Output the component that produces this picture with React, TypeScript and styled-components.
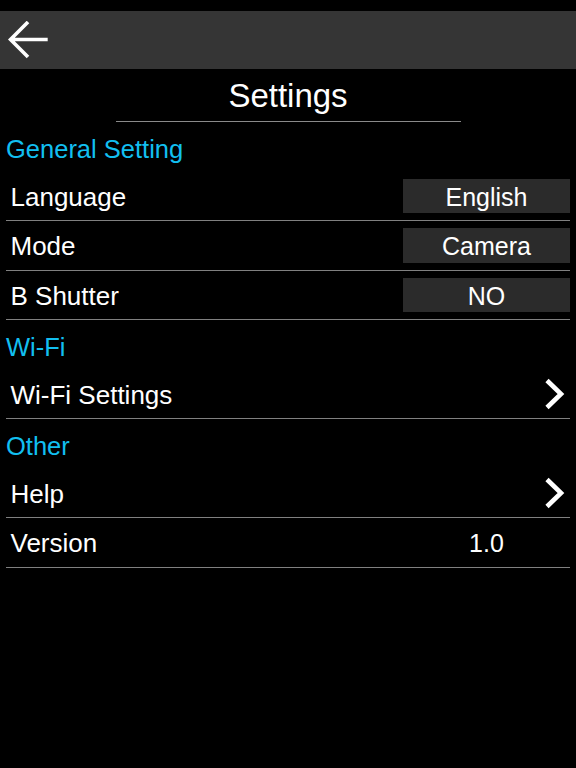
import React from "react";
import styled, { createGlobalStyle } from "styled-components";

const GlobalStyle = createGlobalStyle`
  html, body {
    margin: 0;
    padding: 0;
    background: #000;
    min-height: 100vh;
  }
  body {
    font-family: "Liberation Sans", Arial, sans-serif;
    color: #fff;
  }
`;

const Page = styled.div`
  padding-top: 11px;
  background: #000;
  min-height: 757px;
`;

const Toolbar = styled.div`
  height: 57.7px;
  background: #353535;
  display: flex;
  align-items: center;
  padding-left: 8px;
`;

const BackButton = styled.button`
  background: none;
  border: none;
  padding: 0;
  width: 42px;
  height: 40px;
  display: flex;
  align-items: center;
  cursor: pointer;
`;

const Title = styled.h1`
  width: 345px;
  margin: 0 auto;
  padding: 9px 0 7.5px;
  line-height: 36px;
  font-size: 33px;
  font-weight: normal;
  text-align: center;
  border-bottom: 1.5px solid #8a8a8a;
`;

const List = styled.div`
  padding: 0 6px;
`;

const SectionHeader = styled.div`
  height: 49.5px;
  box-sizing: border-box;
  padding-top: 3.5px;
  line-height: 46px;
  font-size: 25.5px;
  color: #12bff0;
`;

const Row = styled.div`
  height: 49.5px;
  box-sizing: border-box;
  border-bottom: 1px solid #808080;
  display: flex;
  align-items: center;
`;

const Label = styled.span`
  padding: 3px 0 0 4.5px;
  font-size: 26px;
  flex: 1;
`;

const ValueBox = styled.div`
  width: 167px;
  height: 34.4px;
  line-height: 34.4px;
  padding-top: 1px;
  box-sizing: border-box;
  background: #2b2b2b;
  text-align: center;
  font-size: 25px;
`;

const PlainValue = styled.div`
  width: 167px;
  padding-top: 3px;
  text-align: center;
  font-size: 25px;
`;

const ChevronWrap = styled.div`
  width: 22px;
  height: 32px;
  margin-right: 5px;
  display: flex;
`;

const BackArrow = () => (
  <svg width="40" height="38" viewBox="0 0 40 38">
    <path d="M2.5 18.5 H39.7 M20 1 L2.5 18.5 L20 36" fill="none" stroke="#fff" strokeWidth="3.6" />
  </svg>
);

const Chevron = () => (
  <ChevronWrap>
    <svg width="22" height="32" viewBox="0 0 22 32">
      <path d="M4 2.5 L18 16 L4 29.5" fill="none" stroke="#fff" strokeWidth="4.6" />
    </svg>
  </ChevronWrap>
);

type Item = {
  label: string;
  value?: string;
  plain?: string;
  link?: boolean;
};

const sections: { title: string; items: Item[] }[] = [
  {
    title: "General Setting",
    items: [
      { label: "Language", value: "English" },
      { label: "Mode", value: "Camera" },
      { label: "B Shutter", value: "NO" },
    ],
  },
  { title: "Wi-Fi", items: [{ label: "Wi-Fi Settings", link: true }] },
  {
    title: "Other",
    items: [
      { label: "Help", link: true },
      { label: "Version", plain: "1.0" },
    ],
  },
];

const App = () => (
  <Page>
    <GlobalStyle />
    <Toolbar>
      <BackButton aria-label="Back">
        <BackArrow />
      </BackButton>
    </Toolbar>
    <Title>Settings</Title>
    <List>
      {sections.map((s) => (
        <React.Fragment key={s.title}>
          <SectionHeader>{s.title}</SectionHeader>
          {s.items.map((it) => (
            <Row key={it.label}>
              <Label>{it.label}</Label>
              {it.value && <ValueBox>{it.value}</ValueBox>}
              {it.plain && <PlainValue>{it.plain}</PlainValue>}
              {it.link && <Chevron />}
            </Row>
          ))}
        </React.Fragment>
      ))}
    </List>
  </Page>
);

export default App;
